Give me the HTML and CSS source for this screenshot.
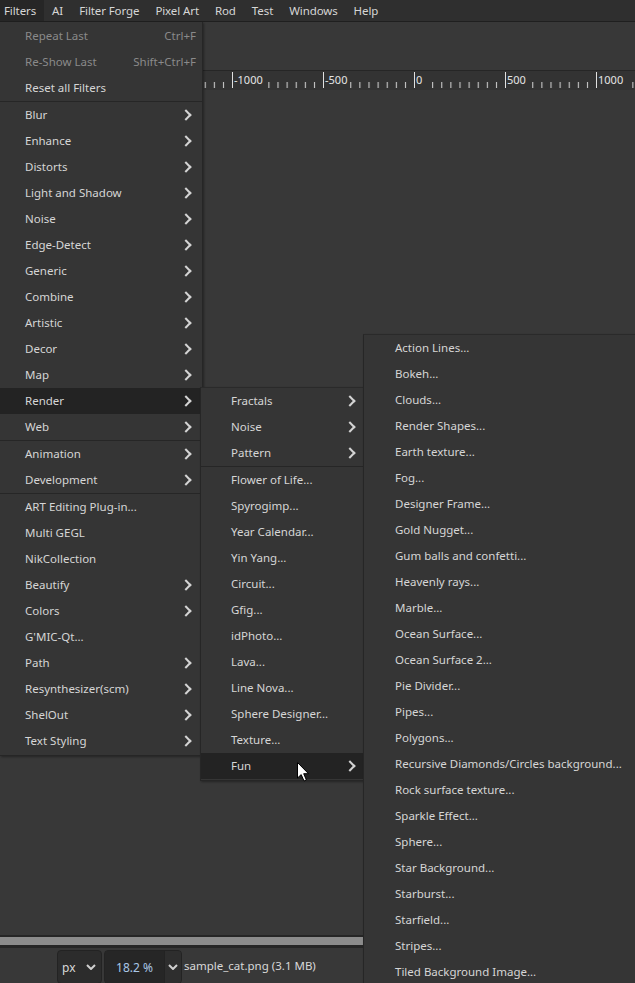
FILE: index.html
```html
<html lang="en"><head>
<meta charset="UTF-8">
<title>GIMP - Filters menu</title>
<link rel="stylesheet" href="styles.css">
</head>
<body>
<div class="app">
  <div class="menubar">
    <span class="mb open">Filters</span>
    <span class="mb">AI</span>
    <span class="mb">Filter Forge</span>
    <span class="mb">Pixel Art</span>
    <span class="mb">Rod</span>
    <span class="mb">Test</span>
    <span class="mb">Windows</span>
    <span class="mb">Help</span>
  </div>
  <div class="toolarea"></div>
  <div class="ruler">
    <svg width="635" height="20" viewBox="0 0 635 20">
      <defs>
        <pattern id="minor" patternUnits="userSpaceOnUse" x="232" y="0" width="9.1" height="20">
          <line x1="0.5" y1="12" x2="0.5" y2="18" stroke="#d8d8d8" stroke-width="1"/>
        </pattern>
      </defs>
      <rect x="0" y="0" width="635" height="20" fill="url(#minor)"/>
      <g class="lbl-bg">
        <rect x="233" y="1" width="30" height="18"/>
        <rect x="324" y="1" width="24" height="18"/>
        <rect x="415" y="1" width="10" height="18"/>
        <rect x="506" y="1" width="23" height="18"/>
        <rect x="597" y="1" width="31" height="18"/>
      </g>
      <g stroke="#e0e0e0" stroke-width="1">
        <line x1="232.5" y1="2" x2="232.5" y2="18"/>
        <line x1="323.5" y1="2" x2="323.5" y2="18"/>
        <line x1="414.5" y1="2" x2="414.5" y2="18"/>
        <line x1="505.5" y1="2" x2="505.5" y2="18"/>
        <line x1="596.5" y1="2" x2="596.5" y2="18"/>
      </g>
      <g class="lbl">
        <text x="234" y="14">-1000</text>
        <text x="325" y="14">-500</text>
        <text x="416" y="14">0</text>
        <text x="507" y="14">500</text>
        <text x="598" y="14">1000</text>
      </g>
    </svg>
  </div>
  <div class="canvas"></div>
  <div class="hscroll"><div class="thumb"></div></div>
  <div class="status">
    <div class="combo unit"><span>px</span><svg class="dd" width="10" height="6" viewBox="0 0 10 6"><polyline points="1,1 5,5 9,1"/></svg></div>
    <div class="combo zoom"><span class="zval">18.2 %</span><span class="zbtn"><svg class="dd" width="10" height="6" viewBox="0 0 10 6"><polyline points="1,1 5,5 9,1"/></svg></span></div>
    <span class="fname">sample_cat.png (3.1 MB)</span>
  </div>
</div>

<!-- popup: Filters -->
<div class="menu m-filters">
  <div class="item off"><span>Repeat Last</span><span class="acc">Ctrl+F</span></div>
  <div class="item off"><span>Re-Show Last</span><span class="acc">Shift+Ctrl+F</span></div>
  <div class="item"><span>Reset all Filters</span></div>
  <div class="sep"></div>
  <div class="item sub"><span>Blur</span></div>
  <div class="item sub"><span>Enhance</span></div>
  <div class="item sub"><span>Distorts</span></div>
  <div class="item sub"><span>Light and Shadow</span></div>
  <div class="item sub"><span>Noise</span></div>
  <div class="item sub"><span>Edge-Detect</span></div>
  <div class="item sub"><span>Generic</span></div>
  <div class="item sub"><span>Combine</span></div>
  <div class="item sub"><span>Artistic</span></div>
  <div class="item sub"><span>Decor</span></div>
  <div class="item sub"><span>Map</span></div>
  <div class="item sub hot"><span>Render</span></div>
  <div class="item sub"><span>Web</span></div>
  <div class="sep"></div>
  <div class="item sub"><span>Animation</span></div>
  <div class="item sub"><span>Development</span></div>
  <div class="sep"></div>
  <div class="item"><span>ART Editing Plug-in...</span></div>
  <div class="item"><span>Multi GEGL</span></div>
  <div class="item"><span>NikCollection</span></div>
  <div class="item sub"><span>Beautify</span></div>
  <div class="item sub"><span>Colors</span></div>
  <div class="item"><span>G'MIC-Qt...</span></div>
  <div class="item sub"><span>Path</span></div>
  <div class="item sub"><span>Resynthesizer(scm)</span></div>
  <div class="item sub"><span>ShelOut</span></div>
  <div class="item sub"><span>Text Styling</span></div>
</div>

<!-- popup: Render -->
<div class="menu m-render">
  <div class="item sub"><span>Fractals</span></div>
  <div class="item sub"><span>Noise</span></div>
  <div class="item sub"><span>Pattern</span></div>
  <div class="sep"></div>
  <div class="item"><span>Flower of Life...</span></div>
  <div class="item"><span>Spyrogimp...</span></div>
  <div class="item"><span>Year Calendar...</span></div>
  <div class="item"><span>Yin Yang...</span></div>
  <div class="item"><span>Circuit...</span></div>
  <div class="item"><span>Gfig...</span></div>
  <div class="item"><span>idPhoto...</span></div>
  <div class="item"><span>Lava...</span></div>
  <div class="item"><span>Line Nova...</span></div>
  <div class="item"><span>Sphere Designer...</span></div>
  <div class="item"><span>Texture...</span></div>
  <div class="item sub hot"><span>Fun</span></div>
</div>

<!-- popup: Fun -->
<div class="menu m-fun">
  <div class="item"><span>Action Lines...</span></div>
  <div class="item"><span>Bokeh...</span></div>
  <div class="item"><span>Clouds...</span></div>
  <div class="item"><span>Render Shapes...</span></div>
  <div class="item"><span>Earth texture...</span></div>
  <div class="item"><span>Fog...</span></div>
  <div class="item"><span>Designer Frame...</span></div>
  <div class="item"><span>Gold Nugget...</span></div>
  <div class="item"><span>Gum balls and confetti...</span></div>
  <div class="item"><span>Heavenly rays...</span></div>
  <div class="item"><span>Marble...</span></div>
  <div class="item"><span>Ocean Surface...</span></div>
  <div class="item"><span>Ocean Surface 2...</span></div>
  <div class="item"><span>Pie Divider...</span></div>
  <div class="item"><span>Pipes...</span></div>
  <div class="item"><span>Polygons...</span></div>
  <div class="item"><span>Recursive Diamonds/Circles background...</span></div>
  <div class="item"><span>Rock surface texture...</span></div>
  <div class="item"><span>Sparkle Effect...</span></div>
  <div class="item"><span>Sphere...</span></div>
  <div class="item"><span>Star Background...</span></div>
  <div class="item"><span>Starburst...</span></div>
  <div class="item"><span>Starfield...</span></div>
  <div class="item"><span>Stripes...</span></div>
  <div class="item"><span>Tiled Background Image...</span></div>
</div>

<svg class="cursor" width="14" height="22" viewBox="0 0 14 22">
  <path d="M1.5 1.5 L1.5 17 L5.2 13.6 L8 20 L10.4 19 L7.7 12.7 L12.5 12.7 Z" fill="#fff" stroke="#000" stroke-width="1" stroke-linejoin="round"/>
</svg>
</body></html>
```

FILE: styles.css
```css
* {
  box-sizing: border-box;
}

html, body {
  margin: 0;
  height: 100%;
  overflow: hidden;
}

body {
  background: #383838;
  color: #d6d6d6;
  font-family: "Noto Sans", "Open Sans", sans-serif;
  font-size: 11.5px;
  position: relative;
}

.app {
  display: flex;
  flex-direction: column;
  height: 100%;
}

.menubar {
  display: flex;
  height: 22px;
  background: #2f2f2f;
  border-bottom: 1px solid #1f1f1f;
}

.mb {
  display: flex;
  align-items: center;
  padding: 0 8px 1px 8px;
  font-size: 11.5px;
  letter-spacing: -0.1px;
}

.mb:first-child {
  padding-left: 4px;
}

.mb.open {
  background: #262626;
}

.toolarea {
  height: 48px;
  background: #383838;
}

.ruler {
  height: 20px;
  background: #333333;
  border-top: 1px solid #262626;
  overflow: hidden;
}

.ruler svg {
  display: block;
  margin-top: -1px;
}

.lbl-bg rect {
  fill: #333333;
}

.lbl text {
  fill: #e4e4e4;
  font-family: "Noto Sans", sans-serif;
  font-size: 11px;
}

.canvas {
  flex: 1;
  background: #383838;
}

.hscroll {
  height: 13px;
  background: #262626;
  padding: 2px 0 3px 0;
}

.hscroll .thumb {
  height: 100%;
  background: #8c8c8c;
}

.status {
  height: 35px;
  display: flex;
  align-items: flex-start;
  padding: 2px 0 0 57px;
  background: #383838;
}

.combo {
  display: flex;
  align-items: center;
  height: 34px;
  background: #2c2c2c;
  border: 1px solid #232323;
  border-radius: 4px;
  color: #d8d8d8;
  font-size: 12px;
}

.unit {
  width: 45px;
  padding: 0 0 0 4px;
  justify-content: space-between;
}

.unit .dd {
  margin-right: 5px;
}

.dd polyline {
  fill: none;
  stroke: #d0d0d0;
  stroke-width: 2;
}

.zoom {
  width: 78px;
  margin-left: 2px;
  overflow: hidden;
}

.zval {
  width: 59px;
  height: 100%;
  background: #262626;
  display: flex;
  align-items: center;
  justify-content: center;
  color: #a9c6e6;
}

.zbtn {
  flex: 1;
  height: 100%;
  display: flex;
  align-items: center;
  justify-content: center;
  border-left: 1px solid #232323;
  background: #2e2e2e;
}

.fname {
  margin-left: 2px;
  line-height: 32px;
  font-size: 11.5px;
  color: #d8d8d8;
}

/* popup menus */
.menu {
  position: absolute;
  background: #353535;
  border: 1px solid #262626;
  border-top: 0;
  padding: 1px 0 1px 0;
  box-shadow: 1px 1px 2px rgba(0, 0, 0, 0.35);
}

.m-filters {
  left: 0;
  top: 22px;
  width: 203px;
  border-left: 0;
}

.m-render {
  left: 200px;
  top: 387px;
  width: 164px;
  padding-top: 0;
  border-top: 1px solid #2a2a2a;
}

.m-fun {
  left: 363px;
  top: 334px;
  width: 300px;
  padding-top: 0;
  border-top: 1px solid #2a2a2a;
}

.item {
  display: flex;
  align-items: center;
  justify-content: space-between;
  height: 26px;
  padding: 0 6px 2px 25px;
  white-space: nowrap;
}

.m-render .item {
  padding-left: 30px;
}

.m-fun .item {
  padding-left: 31px;
}

.item.off {
  color: #8a8a8a;
}

.item .acc {
  color: #8a8a8a;
}

.item.hot {
  background: #232323;
}

.item.sub::after {
  content: "";
  width: 6px;
  height: 6px;
  border-right: 2px solid #d4d4d4;
  border-top: 2px solid #d4d4d4;
  transform: rotate(45deg);
  margin: 2px 6px 0 0;
}

.m-render .item.sub::after {
  margin-right: 3px;
}

.sep {
  height: 1px;
  background: #262626;
}

.cursor {
  position: absolute;
  left: 296px;
  top: 761px;
}
```
